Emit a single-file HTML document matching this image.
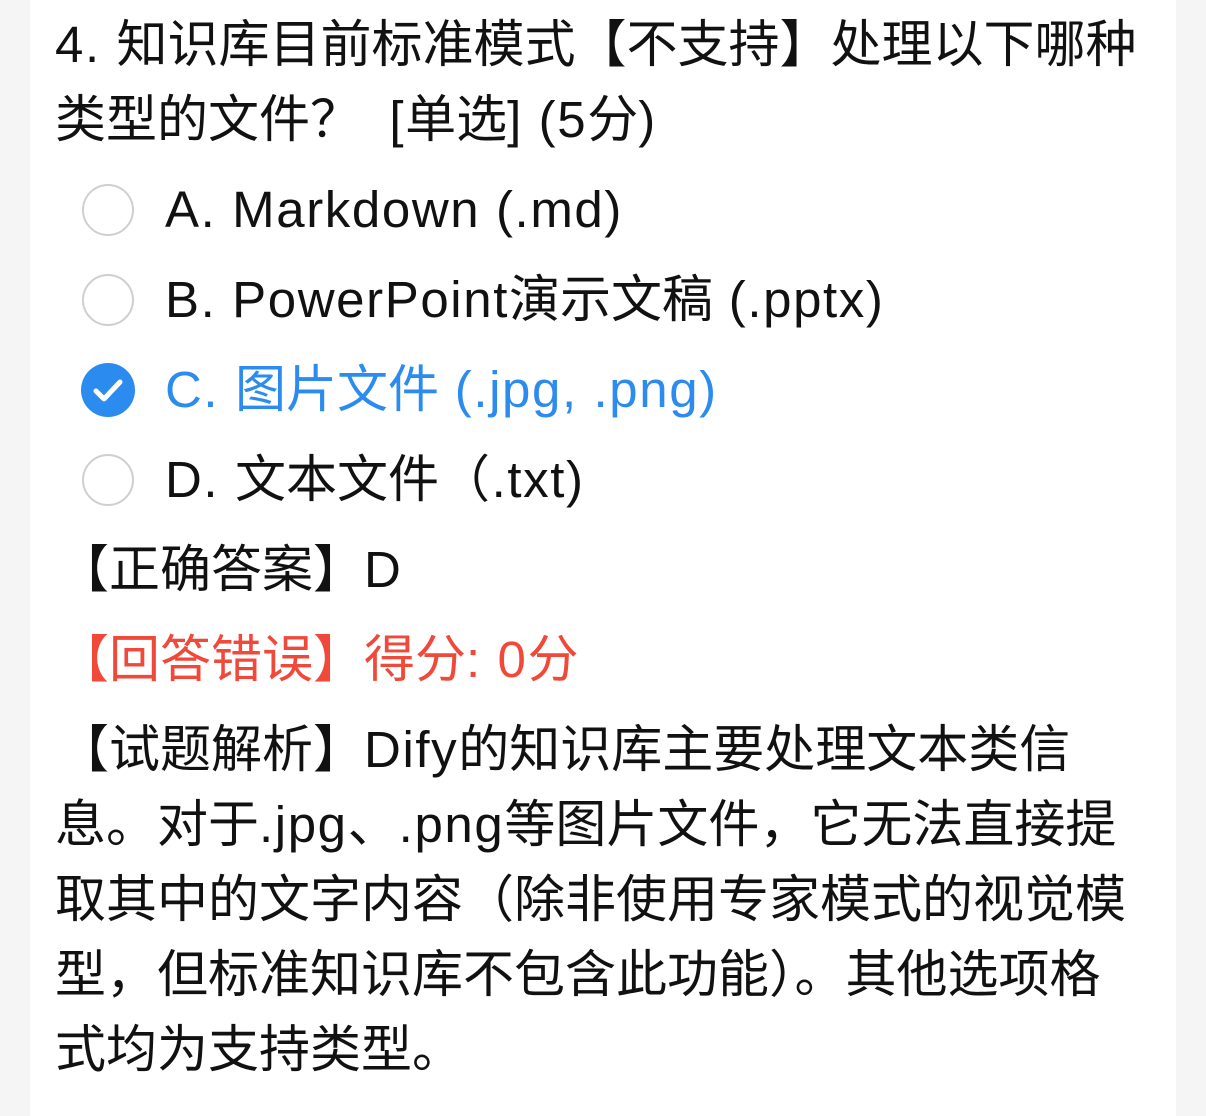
<!DOCTYPE html>
<html><head><meta charset="utf-8"><style>
html,body{margin:0;padding:0}
body{width:1206px;height:1116px;background:#f5f5f5;position:relative;overflow:hidden;font-family:"Liberation Sans","Noto Sans CJK SC",sans-serif;color:#111}
.card{position:absolute;left:30px;top:0;width:1146px;height:1116px;background:#fff}
.l{position:absolute;left:55px;font-size:51px;line-height:60px;white-space:pre;transform:translateY(-50%)}
.o{left:165px}
.e{letter-spacing:1.6px}
.c{position:absolute;left:82px;width:52px;height:52px;border:2.5px solid #cfcfcf;border-radius:50%;box-sizing:border-box;transform:translateY(-50%)}
.blue{color:#2b8bee}
.red{color:#f0493a}
</style></head><body>
<div class="card"></div>
<div class="l" style="top:45px"><span class="e">4. </span>知识库目前标准模式【不支持】处理以下哪种</div>
<div class="l" style="top:120px">类型的文件？  <span class="e">[</span>单选<span class="e">] (5</span>分<span class="e">)</span></div>
<div class="c" style="top:210px"></div>
<div class="l o e" style="top:210px">A. Markdown (.md)</div>
<div class="c" style="top:300px"></div>
<div class="l o" style="top:300px"><span class="e">B. PowerPoint</span>演示文稿<span class="e"> (.pptx)</span></div>
<svg style="position:absolute;left:81px;top:363px" width="54" height="54" viewBox="0 0 54 54"><circle cx="27" cy="27" r="27" fill="#2b8bee"/><path d="M15 28 L23 36 L39 19" stroke="#fff" stroke-width="5" fill="none" stroke-linecap="round" stroke-linejoin="round"/></svg>
<div class="l o blue" style="top:390px"><span class="e">C. </span>图片文件<span class="e"> (.jpg, .png)</span></div>
<div class="c" style="top:480px"></div>
<div class="l o" style="top:480px"><span class="e">D. </span>文本文件<span class="e">（.txt)</span></div>
<div class="l" style="top:570px;left:58px">【正确答案】<span class="e">D</span></div>
<div class="l red" style="top:660px;left:58px">【回答错误】得分<span class="e">: 0</span>分</div>
<div class="l" style="top:750px;left:58px">【试题解析】<span class="e">Dify</span>的知识库主要处理文本类信</div>
<div class="l" style="top:825px">息。对于<span class="e">.jpg</span>、<span class="e">.png</span>等图片文件，它无法直接提</div>
<div class="l" style="top:900px">取其中的文字内容（除非使用专家模式的视觉模</div>
<div class="l" style="top:975px">型，但标准知识库不包含此功能）。其他选项格</div>
<div class="l" style="top:1050px">式均为支持类型。</div>
</body></html>
